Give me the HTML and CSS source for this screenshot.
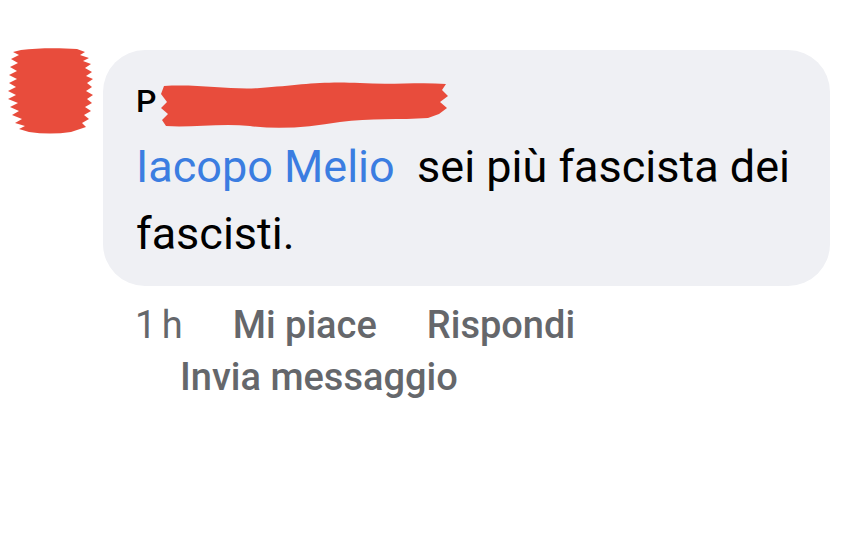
FILE: index.html
```html
<!DOCTYPE html>
<html lang="it">
<head>
    <meta charset="UTF-8">
    <meta name="viewport" content="width=device-width, initial-scale=1.0">
    <title>Commento</title>
    <link rel="stylesheet" href="styles.css">
</head>
<body>
<div class="comment">
    <div class="avatar">
        <svg width="86" height="86" viewBox="0 0 86 86">
            <path fill="#e84c3c" d="M14 2 C30 0 52 0 70 1 L78 4 L73 7 L82 10 L76 13 L84 16 L78 20 L85 24 L79 28 L86 31 L80 35 L85 39 L79 43 L86 47 L80 51 L85 55 L78 59 L84 63 L77 67 L82 71 L75 75 L79 79 L64 84 C50 86 36 86 22 84 L12 81 L18 78 L8 75 L15 71 L5 67 L12 63 L3 59 L11 55 L1 51 L9 47 L1 43 L9 39 L2 35 L10 31 L2 27 L10 23 L3 19 L11 15 L4 11 L12 7 L6 4 Z"/>
        </svg>
    </div>
    <div class="comment-body">
        <div class="bubble">
            <div class="author">P<svg class="redact" width="290" height="52" viewBox="0 0 290 52">
                <path fill="#e84c3c" d="M4 6 C40 4 70 10 100 8 C140 5 160 1 200 3 C230 5 260 2 286 4 L282 10 L288 16 L280 22 L287 28 L279 34 L268 38 C240 40 210 38 180 42 C150 47 120 50 90 46 C60 43 30 48 6 46 L2 40 L8 34 L1 28 L7 22 L1 14 Z"/>
            </svg></div>
            <p class="text"><span class="mention">Iacopo Melio</span>&nbsp; <span>sei più fascista dei</span> <span>fascisti.</span></p>
        </div>
        <div class="actions">
            <span class="time">1 h</span>
            <span class="action">Mi piace</span>
            <span class="action">Rispondi</span>
        </div>
        <div class="actions actions-second">
            <span class="action">Invia messaggio</span>
        </div>
    </div>
</div>
</body>
</html>
```

FILE: styles.css
```css
body {
    background-color: #FFFFFF;
    color: #000000;
    font-family: Roboto, "Noto Sans", sans-serif;
    margin: 0;
    padding: 0;
}

.comment {
    display: flex;
    padding: 48px 30px 0 7px;
    gap: 10px;
}

.avatar {
    flex: none;
    width: 86px;
    height: 86px;
}

.comment-body {
    flex: 1;
}

.bubble {
    margin-top: 2px;
    background-color: #eff0f4;
    border-radius: 42px;
    padding: 31px 20px 19px 33px;
}

.author {
    position: relative;
    font-size: 32px;
    font-weight: 500;
    line-height: 40px;
}

.redact {
    position: absolute;
    left: 24px;
    top: -1px;
}

.text {
    margin: 12px 0 0 0;
    font-size: 45px;
    line-height: 67px;
}

.mention {
    color: #3b7de1;
}

.actions {
    display: flex;
    gap: 50px;
    padding-left: 32px;
    margin-top: 17px;
    font-size: 38px;
    line-height: 44px;
    color: #65676b;
}

.actions-second {
    padding-left: 77px;
    margin-top: 8px;
}

.time {
    word-spacing: -4px;
}

.action {
    font-weight: 500;
}
```
